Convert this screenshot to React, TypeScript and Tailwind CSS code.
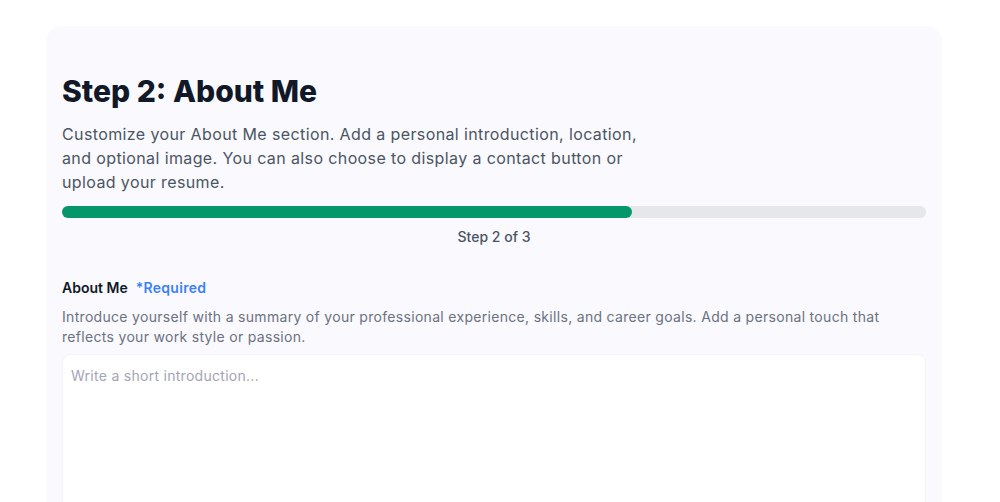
import React from "react";

export default function App() {
  return (
    <div
      className="min-h-screen bg-white pt-[26px] overflow-hidden"
      style={{ fontFamily: '"Inter", "Open Sans", sans-serif' }}
    >
      <div className="ml-[46px] w-[896px] rounded-2xl bg-[#f9f9fe] px-4 pt-[47px] pb-10">
        <h1 className="text-[30px] leading-9 font-extrabold text-[#111827] tracking-[0em]">
          Step 2: About Me
        </h1>
        <p className="mt-[13px] max-w-[600px] text-base leading-6 text-[#4b5563] tracking-[0.024em]">
          Customize your About Me section. Add a personal introduction, location,
          <br />
          and optional image. You can also choose to display a contact button or
          <br />
          upload your resume.
        </p>

        <div className="mt-3 h-3 w-full rounded-full bg-[#e5e7eb]">
          <div className="h-3 w-[66%] rounded-full bg-[#059669]" />
        </div>
        <p className="mt-[9px] text-center text-sm leading-5 font-medium text-[#4b5563]">
          Step 2 of 3
        </p>

        <div className="mt-[31px]">
          <label className="flex items-center gap-2 text-sm leading-5">
            <span className="font-semibold text-[#111827]">About Me</span>
            <span className="font-semibold text-[#3b82f6] tracking-[0.02em]">*Required</span>
          </label>
          <p className="mt-[9px] text-sm leading-5 text-[#6b7280] tracking-[0.022em]">
            Introduce yourself with a summary of your professional experience, skills, and career goals. Add a personal touch that
            <br />
            reflects your work style or passion.
          </p>
          <textarea
            className="mt-[7px] block h-[220px] w-full resize-none rounded-lg border border-[#f4f4f8] bg-white px-2 pt-[11px] text-sm leading-5 text-[#111827] tracking-[0.02em] placeholder:text-[#a3a5b3] outline-none"
            placeholder="Write a short introduction..."
          />
        </div>
      </div>
    </div>
  );
}
